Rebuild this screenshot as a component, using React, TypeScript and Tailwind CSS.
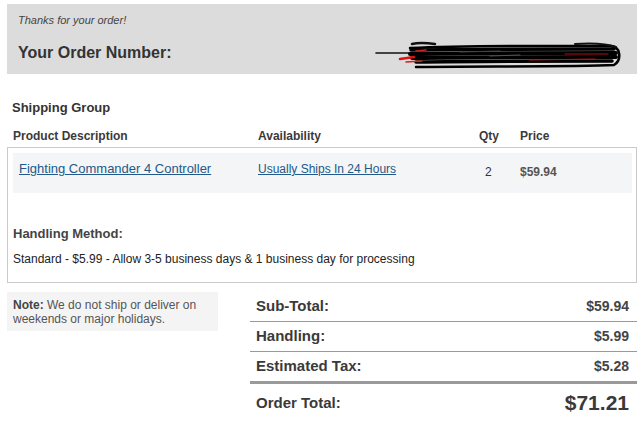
import React from "react";

function Scribble() {
  return (
    <svg
      className="absolute left-[363px] top-[26px]"
      width="274"
      height="48"
      viewBox="0 0 274 48"
    >
      <g fill="none" strokeLinecap="round" strokeLinejoin="round">
        <path d="M6 23 L46 23" stroke="#111" strokeWidth="1.6" />
        <path d="M42 14 C 50 12, 58 13, 65 14" stroke="#111" strokeWidth="2.5" />
        <path d="M40 18 C 100 15, 180 16, 240 16 C 251 16, 252 30, 244 35 C 200 37, 100 36, 46 37" stroke="#000" strokeWidth="2.5" />
        <path d="M41 20 C 100 19, 180 19, 244 19" stroke="#000" strokeWidth="3.5" />
        <path d="M40 24 C 100 23, 180 23, 246 23" stroke="#000" strokeWidth="4" />
        <path d="M42 28 C 110 27, 190 27, 246 27" stroke="#000" strokeWidth="4" />
        <path d="M46 32 C 110 31, 190 31, 242 31" stroke="#000" strokeWidth="3.5" />
        <path d="M205 14 C 222 13, 238 14, 246 17" stroke="#111" strokeWidth="2" />
        <path d="M30 29 L44 27" stroke="#d11" strokeWidth="2.5" />
        <path d="M36 32 L52 31" stroke="#c22" strokeWidth="1.6" />
        <path d="M46 21 L56 20" stroke="#c22" strokeWidth="1.5" />
        <path d="M160 30 L225 29" stroke="#b11" strokeWidth="1.2" />
        <path d="M195 24 L238 24" stroke="#a11" strokeWidth="1" />
        <path d="M120 26 L150 25" stroke="#555" strokeWidth="1" />
        <path d="M90 22 L130 21" stroke="#444" strokeWidth="1" />
      </g>
    </svg>
  );
}

export default function App() {
  return (
    <div className="w-[637px] h-[428px] overflow-hidden bg-white font-['Liberation_Sans',Arial,sans-serif] text-[#333]">
      {/* Header */}
      <div className="relative ml-[7px] mt-[4px] h-[70px] bg-[#dcdcdc] pl-[11px] pt-[9px]">
        <p className="text-[11px] italic leading-[14px] text-[#444]">Thanks for your order!</p>
        <p className="mt-[16px] text-[16px] font-bold leading-[20px] text-[#333]">Your Order Number:</p>
        <Scribble />
      </div>

      {/* Shipping Group */}
      <h2 className="mt-[26px] ml-[12px] text-[13px] font-bold leading-[16px] text-[#333]">Shipping Group</h2>

      <div className="mt-[13px] ml-[13px] flex text-[12px] font-bold leading-[14px] text-[#3a3a3a]">
        <div className="w-[245px]">Product Description</div>
        <div className="w-[221px]">Availability</div>
        <div className="w-[41px]">Qty</div>
        <div>Price</div>
      </div>

      <div className="ml-[7px] mt-[4px] h-[136px] w-[630px] border border-[#cacaca] px-[5px] pt-[5px]">
        <div className="flex h-[40px] w-[619px] items-start bg-[#f4f5f6] pl-[6px] pt-[8px]">
          <a href="#" className="w-[239px] text-[13px] leading-[15px] text-[#23598a] underline">
            Fighting Commander 4 Controller
          </a>
          <a href="#" className="mt-[1px] w-[227px] text-[12px] leading-[14px] text-[#23598a] underline">
            Usually Ships In 24 Hours
          </a>
          <span className="mt-[4px] w-[35px] text-[12px] leading-[14px] text-[#333]">2</span>
          <span className="mt-[4px] text-[12px] font-bold leading-[14px] text-[#555]">$59.94</span>
        </div>
        <h3 className="mt-[33px] text-[13px] font-bold leading-[16px] text-[#444]">Handling Method:</h3>
        <p className="mt-[10px] text-[12px] leading-[14px] text-[#222]">
          Standard - $5.99 - Allow 3-5 business days &amp; 1 business day for processing
        </p>
      </div>

      {/* Bottom */}
      <div className="mt-[9px] flex">
        <p className="ml-[7px] h-[39px] w-[211px] bg-[#f4f4f4] px-[6px] pt-[6px] text-[12px] leading-[14px] text-[#555]">
          <b className="text-[#444]">Note:</b> We do not ship or deliver on weekends or major holidays.
        </p>
        <div className="ml-[32px] w-[387px]">
          <div className="flex h-[30px] items-center justify-between border-b border-[#9a9a9a] pl-[6px] pr-[8px]">
            <span className="text-[15px] font-bold text-[#3a3a3a]">Sub-Total:</span>
            <span className="text-[14px] font-bold text-[#444]">$59.94</span>
          </div>
          <div className="flex h-[30px] items-center justify-between border-b border-[#9a9a9a] pl-[6px] pr-[8px]">
            <span className="text-[15px] font-bold text-[#3a3a3a]">Handling:</span>
            <span className="text-[14px] font-bold text-[#444]">$5.99</span>
          </div>
          <div className="flex h-[32px] items-center justify-between border-b-[3px] border-[#9a9a9a] pl-[6px] pr-[8px]">
            <span className="text-[15px] font-bold text-[#3a3a3a]">Estimated Tax:</span>
            <span className="text-[14px] font-bold text-[#444]">$5.28</span>
          </div>
          <div className="flex h-[38px] items-center justify-between pl-[6px] pr-[8px]">
            <span className="text-[15px] font-bold text-[#3a3a3a]">Order Total:</span>
            <span className="text-[21px] font-bold text-[#3a3a3a]">$71.21</span>
          </div>
        </div>
      </div>
    </div>
  );
}
